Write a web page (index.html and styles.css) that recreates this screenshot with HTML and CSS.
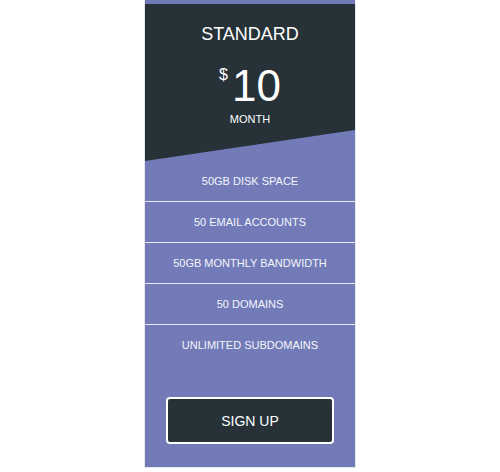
FILE: index.html
```html
<!DOCTYPE html>
<html lang="en">
<head>
<meta charset="utf-8">
<title>Pricing</title>
<link rel="stylesheet" href="styles.css">
</head>
<body>
<div class="card">
  <div class="header">
    <div class="plan">STANDARD</div>
    <div class="price"><span class="cur">$</span><span class="amount">10</span></div>
    <div class="period">MONTH</div>
  </div>
  <ul class="features">
    <li>50GB DISK SPACE</li>
    <li>50 EMAIL ACCOUNTS</li>
    <li>50GB MONTHLY BANDWIDTH</li>
    <li>50 DOMAINS</li>
    <li>UNLIMITED SUBDOMAINS</li>
  </ul>
  <div class="action"><button class="signup">SIGN UP</button></div>
</div>
</body>
</html>
```
FILE: styles.css
```css
html, body {
  margin: 0;
  padding: 0;
  background: #ffffff;
}
body {
  font-family: "Liberation Sans", Arial, sans-serif;
}
.card {
  width: 210px;
  margin: 0 auto;
  padding-top: 4px;
  background: #727bb7;
  color: #f4f5fb;
  border-left: 1px solid #e6e6ee;
  border-right: 1px solid #e6e6ee;
  border-bottom: 1px solid #e6e6ee;
}
.header {
  height: 157px;
  box-sizing: border-box;
  background: #263238;
  color: #ffffff;
  clip-path: polygon(0 0, 100% 0, 100% 126px, 0 100%);
  display: flex;
  flex-direction: column;
  align-items: center;
  padding-top: 19px;
}
.plan {
  font-size: 18px;
  line-height: 22px;
}
.price {
  display: flex;
  align-items: flex-start;
  margin-top: 19px;
}
.cur {
  font-size: 16px;
  line-height: 16px;
  margin-top: 3px;
  margin-right: 4px;
}
.amount {
  font-size: 44px;
  line-height: 44px;
}
.period {
  font-size: 11px;
  line-height: 14px;
  margin-top: 4px;
}
.features {
  list-style: none;
  margin: 0;
  padding: 0;
}
.features li {
  font-size: 11px;
  line-height: 40px;
  text-align: center;
  border-bottom: 1px solid #e8eaf5;
}
.features li:last-child {
  border-bottom: none;
}
.action {
  padding: 32px 21px 23px;
}
.signup {
  display: block;
  width: 100%;
  height: 47px;
  background: #263238;
  color: #ffffff;
  border: 2px solid #ffffff;
  border-radius: 4px;
  font-family: "Liberation Sans", Arial, sans-serif;
  font-size: 14px;
  padding: 0;
}
```
